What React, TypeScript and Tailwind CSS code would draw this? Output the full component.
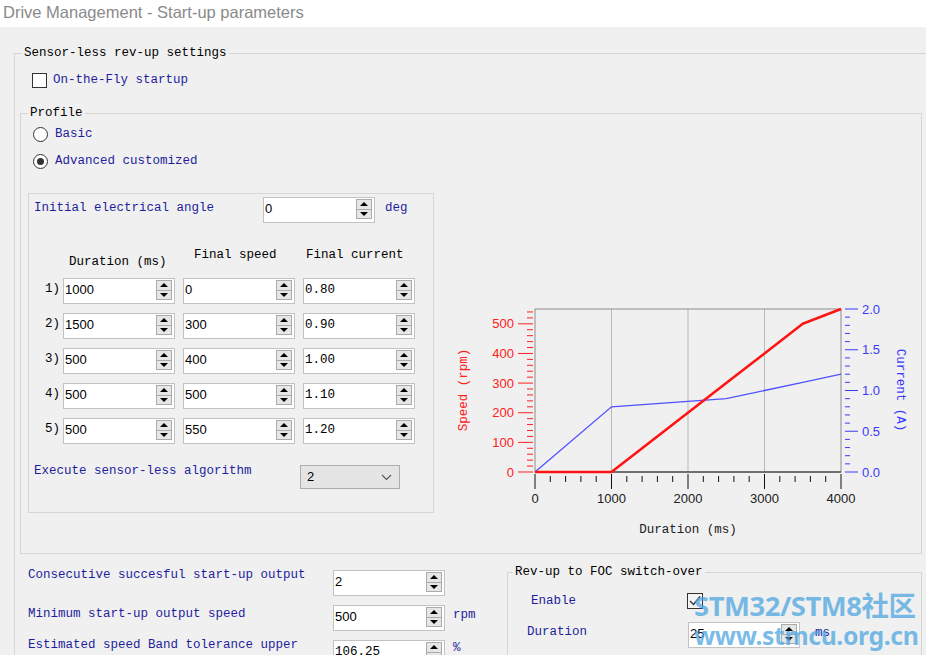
import React from "react";

const MONO = "font-['Liberation_Mono',monospace]";
const SANS = "font-['Liberation_Sans',Arial,sans-serif]";

type Point = [number, number];

// plot frame of the start-up chart, in svg units
const X0 = 535;
const X1 = 841;
const Y0 = 472;
const Y1 = 309;

const tx = (t: number) => X0 + (t / 4000) * (X1 - X0);
const sy = (v: number) => Y0 - (v / 550) * (Y0 - Y1);
const cy = (a: number) => Y0 - (a / 2) * (Y0 - Y1);

const speedProfile: Point[] = [[0, 0], [1000, 0], [2500, 300], [3000, 400], [3500, 500], [4000, 550]];
const currentProfile: Point[] = [[0, 0], [1000, 0.8], [2500, 0.9], [3000, 1.0], [3500, 1.1], [4000, 1.2]];

const steps = [
    { duration: "1000", speed: "0", current: "0.80" },
    { duration: "1500", speed: "300", current: "0.90" },
    { duration: "500", speed: "400", current: "1.00" },
    { duration: "500", speed: "500", current: "1.10" },
    { duration: "500", speed: "550", current: "1.20" },
];

function Arrow({ up }: { up?: boolean }) {
    return up
        ? <span className="h-0 w-0 border-x-[4px] border-b-[4px] border-x-transparent border-b-black" />
        : <span className="h-0 w-0 border-x-[4px] border-t-[4px] border-x-transparent border-t-black" />;
}

function SpinBox({ value, mono, className = "" }: { value: string, mono?: boolean, className?: string }) {
    return (
        <div className={`flex h-[26px] w-[112px] shrink-0 border border-[#c2c2c2] bg-white ${className}`}>
            <span className={`flex-1 pl-[1px] pt-[3px] leading-[16px] text-black ${mono ? `${MONO} text-[12.5px]` : `${SANS} text-[13px]`}`}>{value}</span>
            <div className="mr-[2px] mt-[1px] flex h-[20px] w-[16px] flex-col border border-[#ababab] bg-[#e6e6e6]">
                <div className="flex flex-1 items-center justify-center border-b border-[#ababab]"><Arrow up /></div>
                <div className="flex flex-1 items-center justify-center"><Arrow /></div>
            </div>
        </div>
    );
}

function Label({ children, className = "" }: { children: React.ReactNode, className?: string }) {
    return <span className={`shrink-0 text-[12.5px] leading-[16px] text-[#1e1e9c] ${MONO} ${className}`}>{children}</span>;
}

function Radio({ checked }: { checked?: boolean }) {
    return (
        <span className="flex h-[15px] w-[15px] items-center justify-center rounded-full border border-[#333] bg-white">
            {checked && <span className="h-[7px] w-[7px] rounded-full bg-[#333]" />}
        </span>
    );
}

function Chart() {
    const speedTicks = Array.from({ length: 28 }, (_, i) => i * 20);
    const currentTicks = Array.from({ length: 21 }, (_, i) => i / 10);
    const timeTicks = Array.from({ length: 21 }, (_, i) => i * 200);
    const speedLine = speedProfile.map(([t, v]) => `${tx(t)},${sy(v)}`).join(" ");
    const currentLine = currentProfile.map(([t, a]) => `${tx(t)},${cy(a)}`).join(" ");

    return (
        <svg width="470" height="255" viewBox="440 290 470 255" className="ml-[6px] mt-[97px] shrink-0">
            {/* grid + frame */}
            {[1000, 2000, 3000].map(t => (
                <line key={t} x1={tx(t)} y1={Y1} x2={tx(t)} y2={Y0} stroke="#b9b9b9" strokeWidth="1" />
            ))}
            <rect x={X0} y={Y1} width={X1 - X0} height={Y0 - Y1} fill="none" stroke="#8c8c8c" strokeWidth="1" />
            <line x1={X0} y1={Y0} x2={X1} y2={Y0} stroke="#222" strokeWidth="1" />

            {/* speed axis */}
            {speedTicks.map(v => (
                <line key={v} x1={v % 100 === 0 ? 518 : 527} y1={sy(v)} x2={533} y2={sy(v)} stroke="#ff2020" strokeWidth="1" />
            ))}
            {[0, 100, 200, 300, 400, 500].map(v => (
                <text key={v} x={514} y={sy(v)} textAnchor="end" dominantBaseline="central" fill="#ff2020" fontSize="13" fontFamily="Liberation Sans, sans-serif">{v}</text>
            ))}

            {/* current axis */}
            {currentTicks.map(a => (
                <line key={a} x1={845} y1={cy(a)} x2={Math.round(a * 10) % 5 === 0 ? 858 : 850} y2={cy(a)} stroke="#3a3aff" strokeWidth="1" />
            ))}
            {[0, 0.5, 1, 1.5, 2].map(a => (
                <text key={a} x={862} y={cy(a)} dominantBaseline="central" fill="#3a3aff" fontSize="13" fontFamily="Liberation Sans, sans-serif">{a.toFixed(1)}</text>
            ))}

            {/* time axis */}
            {timeTicks.map(t => (
                <line key={t} x1={tx(t)} y1={t % 1000 === 0 ? 474 : 476} x2={tx(t)} y2={t % 1000 === 0 ? 489 : 482} stroke="#111" strokeWidth="1" />
            ))}
            {[0, 1000, 2000, 3000, 4000].map(t => (
                <text key={t} x={tx(t)} y={498} textAnchor="middle" dominantBaseline="central" fill="#202020" fontSize="13" fontFamily="Liberation Sans, sans-serif">{t}</text>
            ))}

            <text x={688} y={530} textAnchor="middle" dominantBaseline="central" fill="#202020" fontSize="12.5" fontFamily="Liberation Mono, monospace">Duration (ms)</text>
            <text transform="translate(464 390) rotate(-90)" textAnchor="middle" dominantBaseline="central" fill="#ff2020" fontSize="12.5" fontFamily="Liberation Mono, monospace">Speed (rpm)</text>
            <text transform="translate(900 390) rotate(90)" textAnchor="middle" dominantBaseline="central" fill="#3a3aff" fontSize="12.5" fontFamily="Liberation Mono, monospace">Current (A)</text>

            <polyline points={currentLine} fill="none" stroke="#5050ff" strokeWidth="1.3" />
            <polyline points={speedLine} fill="none" stroke="#ff1414" strokeWidth="2.6" strokeLinejoin="round" />
        </svg>
    );
}

function App() {
    return (
        <div className="relative h-[655px] w-[926px] overflow-hidden bg-[#f0f0f0]">
            <div className={`h-[27px] bg-white pl-[3px] text-[16.5px] leading-[24px] text-[#8a8a8a] ${SANS}`}>Drive Management - Start-up parameters</div>

            <div className="pl-[14px] pt-[18px]">
                <fieldset className="w-[940px] border border-[#d6d6d6] pb-[40px]">
                    <legend className={`ml-[7px] px-[2px] text-[12.5px] leading-[16px] text-black ${MONO}`}>Sensor-less rev-up settings</legend>

                    <div className="mt-[11px] flex h-[16px] items-center gap-[6px] pl-[17px]">
                        <span className="h-[15px] w-[15px] border border-[#333] bg-white" />
                        <Label>On-the-Fly startup</Label>
                    </div>

                    {/* profile */}
                    <fieldset className="ml-[5px] mt-[17px] w-[902px] border border-[#d6d6d6] pb-[8px]">
                        <legend className={`ml-[7px] px-[2px] text-[12.5px] leading-[16px] text-black ${MONO}`}>Profile</legend>

                        <div className="mt-[5px] flex h-[16px] items-center gap-[7px] pl-[12px]">
                            <Radio />
                            <Label>Basic</Label>
                        </div>
                        <div className="mt-[11px] flex h-[16px] items-center gap-[7px] pl-[12px]">
                            <Radio checked />
                            <Label>Advanced customized</Label>
                        </div>

                        <div className="ml-[7px] mt-[24px] flex items-start">
                            <fieldset className="h-[320px] w-[406px] shrink-0 border border-[#d6d6d6]">
                                <div className="mt-[3px] flex h-[26px] items-start pl-[5px]">
                                    <Label className="w-[229px] pt-[3px]">Initial electrical angle</Label>
                                    <SpinBox value="0" />
                                    <Label className="ml-[10px] pt-[3px]">deg</Label>
                                </div>

                                <div className={`mt-[23px] flex h-[24px] pl-[34px] text-[12.5px] leading-[16px] text-black ${MONO}`}>
                                    <span className="ml-[6px] mt-[8px] w-[114px]">Duration (ms)</span>
                                    <span className="ml-[11px] mt-[1px] w-[109px]">Final speed</span>
                                    <span className="ml-[3px] mt-[1px]">Final current</span>
                                </div>

                                <div className="mt-[8px] flex flex-col gap-[9px]">
                                    {steps.map((step, index) => (
                                        <div key={index} className="flex h-[26px] items-start gap-[8px] pl-[16px]">
                                            <span className={`-mr-[8px] w-[18px] pt-[3px] text-[12.5px] leading-[16px] text-black ${MONO}`}>{index + 1})</span>
                                            <SpinBox value={step.duration} />
                                            <SpinBox value={step.speed} />
                                            <SpinBox value={step.current} mono />
                                        </div>
                                    ))}
                                </div>

                                <div className="mt-[21px] flex items-start pl-[5px]">
                                    <Label className="-mt-[2px] w-[266px]">Execute sensor-less algorithm</Label>
                                    <div className={`flex h-[24px] w-[100px] items-center justify-between border border-[#adadad] bg-[#e5e5e5] pl-[6px] pr-[7px] text-[13px] text-black ${SANS}`}>
                                        <span>2</span>
                                        <svg width="11" height="7" viewBox="0 0 11 7"><polyline points="1,1 5.5,5.5 10,1" fill="none" stroke="#555" strokeWidth="1.1" /></svg>
                                    </div>
                                </div>
                            </fieldset>

                            <Chart />
                        </div>
                    </fieldset>

                    <div className="flex items-start">
                        <div className="ml-[13px] mt-[13px] w-[479px] shrink-0">
                            <div className="flex items-start">
                                <Label className="w-[305px]">Consecutive succesful start-up output</Label>
                                <SpinBox value="2" className="mt-[3px]" />
                            </div>
                            <div className="mt-[9px] flex items-start">
                                <Label className="mt-[1px] w-[305px]">Minimum start-up output speed</Label>
                                <SpinBox value="500" />
                                <Label className="ml-[8px] mt-[2px]">rpm</Label>
                            </div>
                            <div className="mt-[6px] flex items-start">
                                <Label className="w-[305px]">Estimated speed Band tolerance upper</Label>
                                <SpinBox value="106.25" mono className="mt-[3px]" />
                                <Label className="ml-[8px] mt-[3px]">%</Label>
                            </div>
                        </div>

                        <fieldset className="mt-[10px] h-[200px] w-[415px] shrink-0 border border-[#d6d6d6]">
                            <legend className={`ml-[5px] px-[2px] text-[12.5px] leading-[16px] text-black ${MONO}`}>Rev-up to FOC switch-over</legend>
                            <div className="mt-[13px] flex items-start pl-[23px]">
                                <Label className="w-[156px]">Enable</Label>
                                <span className="flex h-[16px] w-[16px] items-center justify-center border border-[#333] bg-[#f4f4f4]">
                                    <svg width="14" height="14" viewBox="0 0 14 14"><polyline points="2,7 5.5,10.5 12,2.5" fill="none" stroke="#333" strokeWidth="1.4" /></svg>
                                </span>
                            </div>
                            <div className="mt-[13px] flex items-start pl-[19px]">
                                <Label className="mt-[2px] w-[161px]">Duration</Label>
                                <SpinBox value="25" />
                                <Label className="ml-[15px] mt-[3px]">ms</Label>
                            </div>
                        </fieldset>
                    </div>
                </fieldset>
            </div>

            {/* site watermark */}
            <div className="pointer-events-none absolute left-[694px] top-[591px] flex flex-col text-[#4ea6e0]/75 font-['Noto_Sans','Noto_Sans_CJK_SC',sans-serif] font-bold">
                <span className="text-[27.5px] leading-[30px] tracking-[-0.5px]">STM32/STM8社区</span>
                <span className="text-[24.8px] leading-[28px] tracking-[-0.4px]">www.stmcu.org.cn</span>
            </div>
        </div>
    );
}

export default App;
